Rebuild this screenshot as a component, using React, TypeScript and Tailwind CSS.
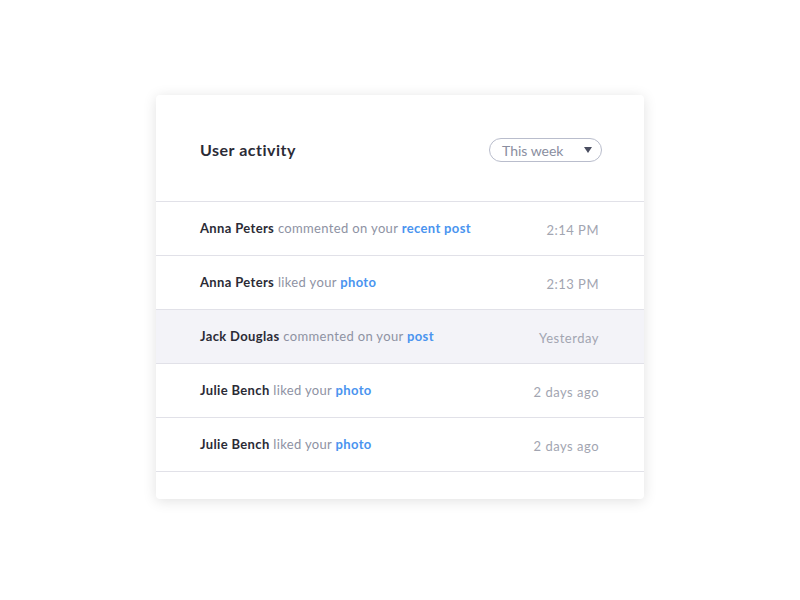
const rows = [
  { name: "Anna Peters", action: "commented on your", target: "recent post", time: "2:14 PM" },
  { name: "Anna Peters", action: "liked your", target: "photo", time: "2:13 PM" },
  { name: "Jack Douglas", action: "commented on your", target: "post", time: "Yesterday", active: true },
  { name: "Julie Bench", action: "liked your", target: "photo", time: "2 days ago" },
  { name: "Julie Bench", action: "liked your", target: "photo", time: "2 days ago" },
];

export default function App() {
  return (
    <div className="min-h-[600px] w-full bg-white flex items-start justify-center pt-[95px] font-['Lato',sans-serif]">
      <div className="w-[488px] bg-white rounded-[4px] shadow-[0_2px_14px_rgba(0,0,0,0.12)] pb-[27px]">
        {/* Header */}
        <div className="h-[107px] flex items-center justify-between pl-[44px] pr-[42px] pt-[4px] border-b border-[#e1e1e8]">
          <h1 className="text-[16px] font-bold text-[#2b2b36] tracking-[0.5px]">User activity</h1>
          <button className="w-[113px] h-[24px] rounded-full border border-[#b9bdcc] flex items-center justify-between pl-[12px] pr-[9px] text-[14px] text-[#8a8ea0]">
            <span>This week</span>
            <svg width="8" height="6" viewBox="0 0 8 6">
              <path d="M0 0 H8 L4 6 Z" fill="#4a4e60" />
            </svg>
          </button>
        </div>

        {/* Rows */}
        {rows.map((r, i) => (
          <div
            key={i}
            className={`h-[54px] flex items-center justify-between pl-[44px] pr-[45px] pt-[4px] border-b border-[#e1e1e8] ${
              r.active ? "bg-[#f3f3f8]" : "bg-white"
            }`}
          >
            <p className="text-[13px] text-[#8e92a3] tracking-[0.35px] -mt-[4px]">
              <span className="font-bold text-[#2b2b36]">{r.name}</span> {r.action}{" "}
              <span className="font-bold text-[#4a94ef]">{r.target}</span>
            </p>
            <span className="text-[13px] text-[#a2a5b1] tracking-[0.5px]">{r.time}</span>
          </div>
        ))}
      </div>
    </div>
  );
}
